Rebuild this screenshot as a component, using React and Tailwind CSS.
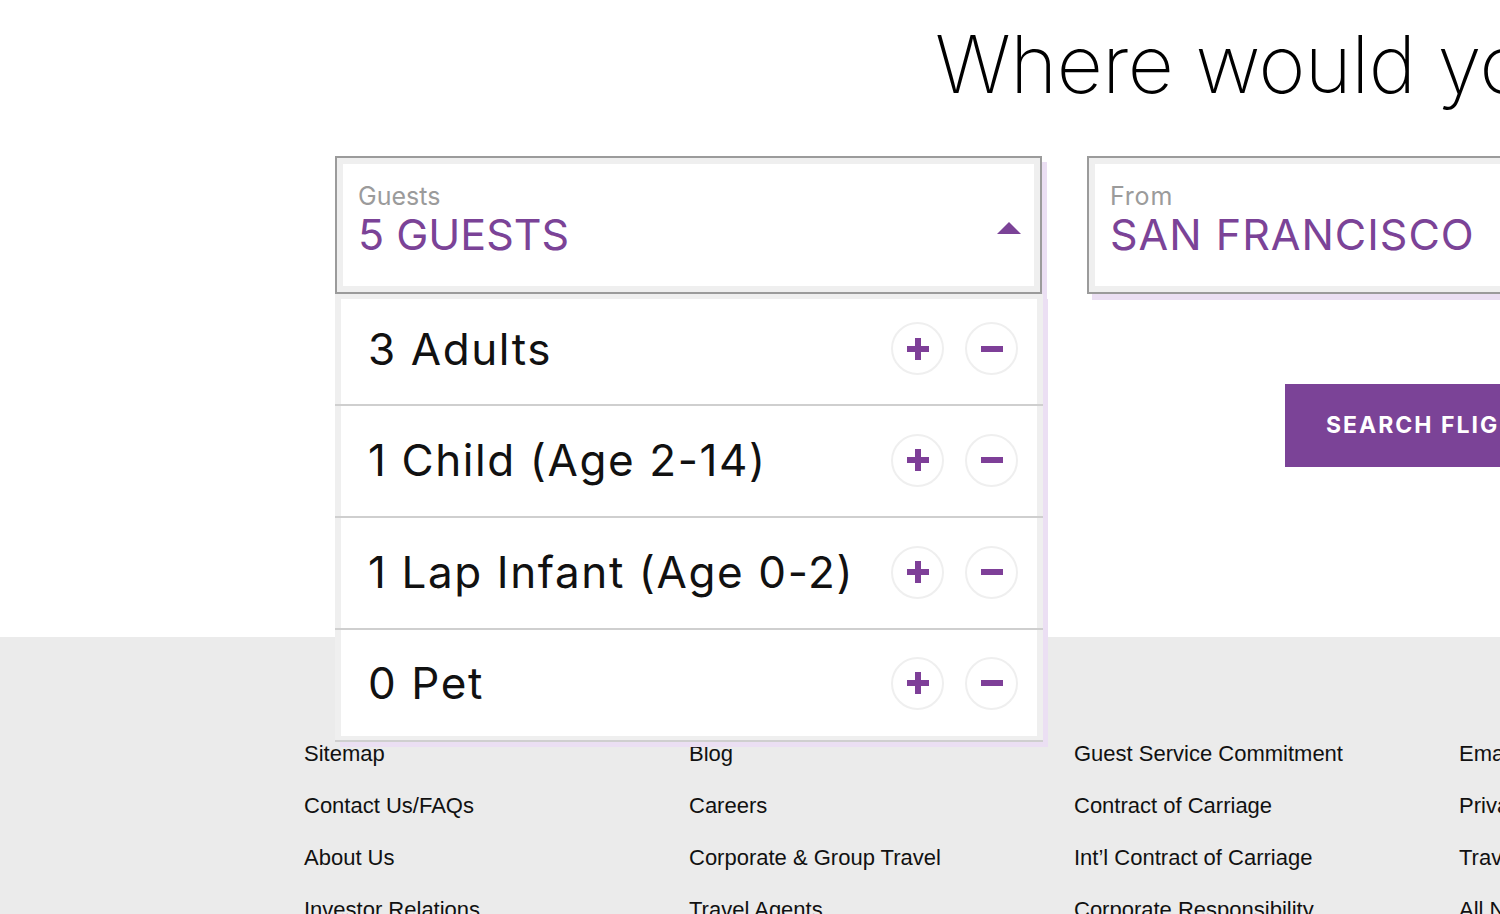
import { useState } from 'react';

const footerLinks = [
  ['Sitemap', 'Contact Us/FAQs', 'About Us', 'Investor Relations'],
  ['Blog', 'Careers', 'Corporate & Group Travel', 'Travel Agents'],
  ['Guest Service Commitment', 'Contract of Carriage', 'Int\u2019l Contract of Carriage', 'Corporate Responsibility'],
  ['Email Deals', 'Privacy Policy', 'Travel Alerts', 'All News'],
];

const guestRows = [
  { id: 'adults', label: (n) => `${n} Adults`, initial: 3 },
  { id: 'child', label: (n) => `${n} Child (Age 2-14)`, initial: 1 },
  { id: 'infant', label: (n) => `${n} Lap Infant (Age 0-2)`, initial: 1 },
  { id: 'pet', label: (n) => `${n} Pet`, initial: 0 },
];

const rowSizes = ['h-[105px] pb-[6px]', 'h-[110px] pb-[2px]', 'h-[110px] pb-[2px]', 'h-[106px]'];

export default function App() {
  const [counts, setCounts] = useState(
    Object.fromEntries(guestRows.map((r) => [r.id, r.initial]))
  );
  const total = Object.values(counts).reduce((a, b) => a + b, 0);

  const change = (id, d) =>
    setCounts((c) => ({ ...c, [id]: Math.max(0, c[id] + d) }));

  return (
    <div className="h-[914px] w-[1500px] overflow-hidden bg-white font-['Inter','Noto_Sans',sans-serif]">
      <section className="h-[637px]">
        <h1 className="whitespace-nowrap pl-[935px] pt-[24px] text-[80px] font-extralight leading-none tracking-[-0.5px] text-black">
          Where would you like to go?
        </h1>

        <div className="mt-[52px] flex pl-[335px]">
          <div className="relative w-[707px] shrink-0">
            <Field label="Guests" value={`${total} GUESTS`} open />
            <div className="absolute left-0 top-full z-10 w-[708px] border-b-2 border-[#cfcfcf] bg-[#efefef] pb-[4px] pt-[5px] shadow-[5px_5px_0_#ebdff3]">
              {guestRows.map((r, i) => (
                <div key={r.id}>
                  {i > 0 && <div className="h-[2px] bg-[#cfcfcf]" />}
                  <div className="px-[6px]">
                    <div className={`flex items-center bg-white pl-[27px] pr-[19px] ${rowSizes[i]}`}>
                      <span className="flex-1 text-[44px] leading-none tracking-[1.6px] text-[#111]">
                        {r.label(counts[r.id])}
                      </span>
                      <div className="flex gap-[21px]">
                        <CircleButton onClick={() => change(r.id, 1)} label="Add">
                          <PlusIcon />
                        </CircleButton>
                        <CircleButton onClick={() => change(r.id, -1)} label="Remove">
                          <MinusIcon />
                        </CircleButton>
                      </div>
                    </div>
                  </div>
                </div>
              ))}
            </div>
          </div>
          <div className="ml-[45px] w-[707px] shrink-0">
            <Field label="From" value="SAN FRANCISCO" wide />
          </div>
        </div>

        <div className="mt-[90px] pl-[1285px]">
          <button className="flex h-[83px] w-[320px] items-center bg-[#7b4397] pl-[41px] text-[23px] font-bold tracking-[2px] text-white">
            SEARCH FLIGHTS
          </button>
        </div>
      </section>

      <footer className="h-[277px] bg-[#ebebeb] pl-[304px] pt-[91px] font-['Liberation_Sans',Arial,sans-serif]">
        <div className="grid grid-cols-[385px_385px_385px_385px]">
          {footerLinks.map((col, i) => (
            <ul key={i}>
              {col.map((l) => (
                <li key={l} className="whitespace-nowrap text-[22px] leading-[52px] text-[#111]">
                  {l}
                </li>
              ))}
            </ul>
          ))}
        </div>
      </footer>
    </div>
  );
}

function Field({ label, value, open, wide }) {
  return (
    <div className="h-[138px] border-2 border-[#9b9b9b] bg-[#efefef] p-[6px] shadow-[5px_6px_0_#ebdff3]">
      <div className="flex h-full items-center bg-white pl-[15px] pr-[13px]">
        <div className="flex-1 pb-[10px]">
          <div className={`text-[25px] leading-none text-[#9b9b9b] ${wide ? 'tracking-[0.8px]' : ''}`}>{label}</div>
          <div
            className={`mt-[4px] whitespace-nowrap text-[43px] leading-none text-[#7b4397] ${
              wide ? 'tracking-[1px]' : ''
            }`}
          >
            {value}
          </div>
        </div>
        {open && (
          <svg width="24" height="12" viewBox="0 0 24 12" className="mt-[6px]">
            <path d="M12 0L24 12H0z" fill="#7b4397" />
          </svg>
        )}
      </div>
    </div>
  );
}

function CircleButton({ children, onClick, label }) {
  return (
    <button
      onClick={onClick}
      aria-label={label}
      className="flex h-[53px] w-[53px] items-center justify-center rounded-full border-2 border-[#efefef] bg-white"
    >
      {children}
    </button>
  );
}

function PlusIcon() {
  return (
    <svg width="22" height="22" viewBox="0 0 22 22">
      <rect x="0" y="8" width="22" height="6" fill="#7e3f98" />
      <rect x="8" y="0" width="6" height="22" fill="#7e3f98" />
    </svg>
  );
}

function MinusIcon() {
  return (
    <svg width="22" height="6" viewBox="0 0 22 6">
      <rect x="0" y="0" width="22" height="6" fill="#7e3f98" />
    </svg>
  );
}
